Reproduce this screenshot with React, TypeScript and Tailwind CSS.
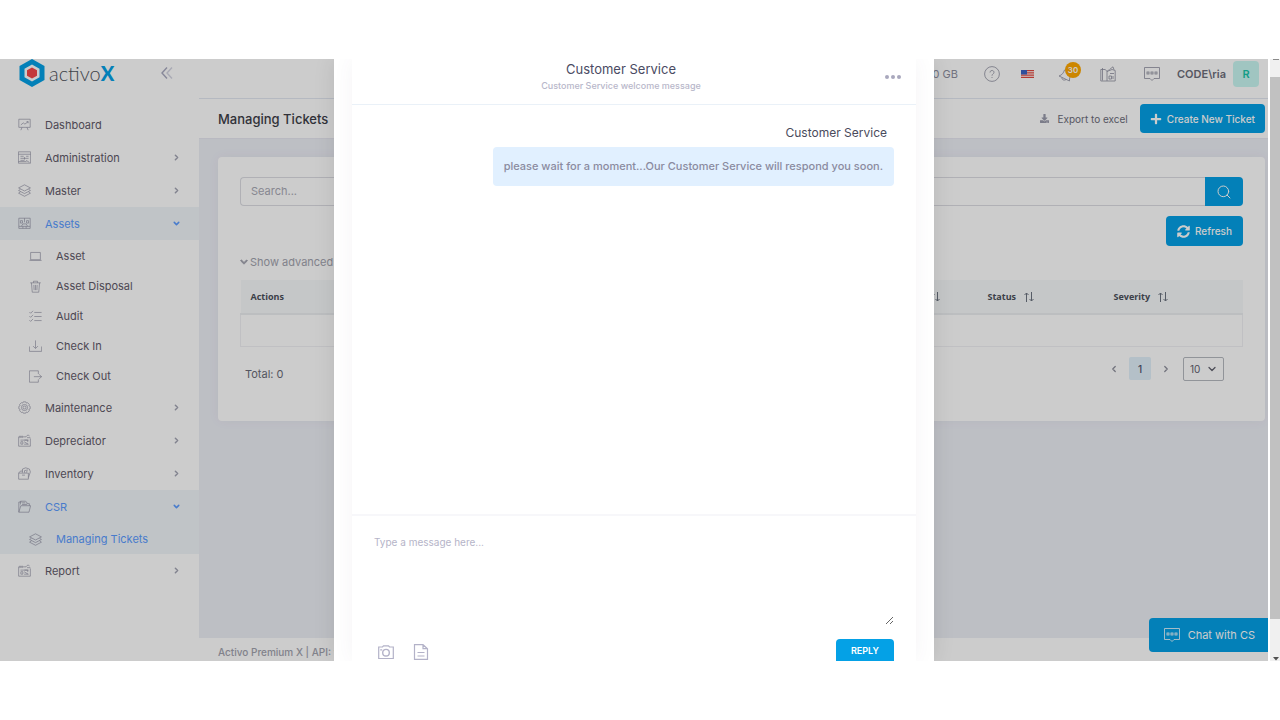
import type { ReactNode } from 'react';
import { FaChevronDown, FaDownload, FaPlus, FaSyncAlt } from 'react-icons/fa';
import { ChevronDown, ChevronLeft, ChevronRight, Search } from 'lucide-react';

type IconName =
  | 'dashboard'
  | 'admin'
  | 'layers'
  | 'assets'
  | 'laptop'
  | 'trash'
  | 'checklist'
  | 'checkIn'
  | 'checkOut'
  | 'gear'
  | 'notebook'
  | 'planner'
  | 'inventory'
  | 'folder'
  | 'chat'
  | 'bell'
  | 'help'
  | 'camera'
  | 'file';

const iconShapes: Record<IconName, ReactNode> = {
  dashboard: (
    <path d="M1 1.500h14v10H1zM5 11.500l-1.500 3.500M11 11.500l1.500 3.500M3.500 8.500l3-2.500 2 1.500 4-3M10.500 4.500h2v2" />
  ),
  admin: (
    <path d="M.5 1h15v14H.5zM.5 4h15M3 6.500h4M10 6.500h3M3 9h10M8 7.500v3M3 11.500h5M.5 13h10M10 11.500l4 2.500" />
  ),
  layers: (
    <path d="M8 1l7.300 3.800L8 8.600.7 4.800zM3 6.500L.7 8 8 11.800 15.300 8 13 6.500M3 9.800L.7 11.300 8 15.100l7.300-3.800L13 9.800" />
  ),
  assets: (
    <path d="M1 1.500h14v10H1zM1 14h14M1 11.500V14M15 11.500V14M3 4.500h2.500v3H3zM10.500 4.500H13v3h-2.500zM4 11.500l2-3h4l2 3M6 14v-2.500M10 14v-2.500M8 1.500v5" />
  ),
  laptop: <path d="M2 3h12v9H2zM.5 12.800h15" />,
  trash: (
    <path d="M1.500 3.500h13M5.500 3.500v-2h5v2M3 3.500l1 11.500h8l1-11.500M6 6l.3 6.500M8 6v6.500M10 6l-.3 6.500" />
  ),
  checklist: (
    <path d="M6.500 3H15.500M6.500 8H15.500M6.500 13H15.500M.5 2.500L2 4 5 1M.5 7.500L2 9l3-3M.5 12.500L2 14l3-3" />
  ),
  checkIn: <path d="M.5 8v6h15V8M8 .5v9.500M5 7.500l3 3 3-3" />,
  checkOut: <path d="M11.500 5V1H.5v14h11v-3.500M6 8.200h9.500M12.500 5.500l3 2.700-3 2.700" />,
  gear: (
    <>
      <path d="M6.500 1h3l.6 1.500 1.800-.4 2 2.100-.5 1.600 1.600.9v2.800l-1.600.8.5 1.700-2 2.100-1.800-.5-.6 1.400h-3l-.7-1.400-1.700.5-2.100-2.100.6-1.700L1 9.500V6.700l1.600-.9L2 4.200l2.100-2.100 1.700.4z" />
      <circle cx="8" cy="8" r="3.800" />
      <circle cx="8" cy="8" r="1.800" />
    </>
  ),
  notebook: (
    <path d="M.8 3.500h9M15.200 5.500V15H.8V3.500M2.500 2v3M5 2v3M9.800 3.500c1.500-2.500 3-2.500 4.500-1M11 4.500h4.200M3 7.500h10M3.500 9.500h2.500v3H3.500zM7.500 9.500l5 3M7.500 12.500h5.500M8 7.500h4v2.500" />
  ),
  planner: (
    <path d="M.8 3.500h4.500L7 5.500l2-2M.8 3.500V15h14.400V4.500L12 3.500 7 5.500V15M2.500 2v12.500M10 7.500h4M9 10h2.500v3H9zM13 10v3M9.500 3.500L13 .8l1 3" />
  ),
  inventory: (
    <path d="M.8 7.500h12V15H.8zM.8 7.500L3 5h2.500M5.500 7V2.500l4-1.500 4.500 1.500 1.200 3.500-2.400 7M8 7V4.500l4-1M10 7l1.500-2.500M5 10h3.500" />
  ),
  folder: (
    <path d="M1 15V2.500h3.500M1 15l2.500-8h12L13.500 15zM3 5.500V1.500h6l2 1.500v1.500h3V7M5 3.500h4M5 5.500h6" />
  ),
  chat: (
    <>
      <path d="M.5 1.500h15v11H10L8 14.500l-2-2H.5z" />
      <rect x="3" y="6" width="2" height="2" />
      <rect x="7" y="6" width="2" height="2" />
      <rect x="11" y="6" width="2" height="2" />
    </>
  ),
  bell: (
    <path d="M1 10l10.500 5M1 10c3-1 4.500-3 5.500-6L9 2l5 3-.5 3c-1.500 2.500-2.200 4-2 7M4 11.500c-.5 2 2 3.500 4 2" />
  ),
  help: (
    <>
      <circle cx="8" cy="8" r="7.400" />
      <path d="M6 6.500c0-2.800 4-2.500 4-.2C10 8 8 7.900 8 9.700M8 11v1" />
    </>
  ),
  camera: (
    <>
      <path d="M.7 3h3.800l1-1.200h5l1 1.200h3.800v11.500H.7zM2.200 5.800h2" strokeWidth="1.200" />
      <circle cx="8" cy="8.700" r="3.300" strokeWidth="1.400" />
    </>
  ),
  file: (
    <path d="M1.500.7H10l4.500 4V15.300h-13zM10 .7v4h4.500M4.500 8.500h7M4.500 12h7" strokeWidth="1.200" />
  ),
};

function Icon({ name, className }: { name: IconName; className?: string }) {
  return (
    <svg
      viewBox="0 0 16 16"
      fill="none"
      stroke="currentColor"
      strokeWidth="0.8"
      aria-hidden="true"
      className={`shrink-0 ${className ?? 'size-[13px]'}`}
    >
      {iconShapes[name]}
    </svg>
  );
}

interface MenuItem {
  label: string;
  icon: IconName;
  leaf?: boolean;
  open?: boolean;
  children?: { label: string; icon: IconName; active?: boolean }[];
}

const menu: MenuItem[] = [
  { label: 'Dashboard', icon: 'dashboard', leaf: true },
  { label: 'Administration', icon: 'admin' },
  { label: 'Master', icon: 'layers' },
  {
    label: 'Assets',
    icon: 'assets',
    open: true,
    children: [
      { label: 'Asset', icon: 'laptop' },
      { label: 'Asset Disposal', icon: 'trash' },
      { label: 'Audit', icon: 'checklist' },
      { label: 'Check In', icon: 'checkIn' },
      { label: 'Check Out', icon: 'checkOut' },
    ],
  },
  { label: 'Maintenance', icon: 'gear' },
  { label: 'Depreciator', icon: 'notebook' },
  { label: 'Inventory', icon: 'inventory' },
  {
    label: 'CSR',
    icon: 'folder',
    open: true,
    children: [{ label: 'Managing Tickets', icon: 'layers', active: true }],
  },
  { label: 'Report', icon: 'notebook' },
];

function Logo() {
  return (
    <a href="#" className="flex items-center gap-1">
      <svg viewBox="0 0 26 28" className="h-7 w-[26px]" aria-hidden="true">
        <path d="M13 0l12.500 7v14L13 28 .5 21V7z" fill="#04a1e6" />
        <path d="M13 5.500l7.500 4.200v8.600L13 22.500l-7.500-4.200V9.700z" fill="#fff" />
        <path d="M13 8.500l5 2.800v5.400l-5 2.800-5-2.800v-5.400z" fill="#f54748" />
      </svg>
      <span className="font-['Lato',sans-serif] text-xl leading-7 font-light text-[#50545c]">
        activo<span className="font-black text-[#04a1e6]">X</span>
      </span>
    </a>
  );
}

function Sidebar() {
  return (
    <aside className="w-[199px] shrink-0 bg-white shadow-[0_0_20px_rgba(82,63,105,0.15)]">
      <div className="flex h-[49px] items-start justify-between pr-[26px] pl-[19px]">
        <Logo />
        <button type="button" aria-label="Collapse menu" className="flex h-7 items-center">
          <svg viewBox="0 0 12 12" className="size-3" fill="none" strokeWidth="1.4" aria-hidden="true">
            <path d="M6 0.500L1 6l5 5.500" stroke="#a9aac0" />
            <path d="M11 0.500L6 6l5 5.500" stroke="#d4d5e2" />
          </svg>
        </button>
      </div>
      <nav>
        <ul>
          {menu.map((item) => (
            <li key={item.label} className={item.label === 'CSR' ? 'bg-[#f0f5f9]' : ''}>
              <a
                href="#"
                className={`flex h-[33px] items-center px-[18px] ${
                  item.open ? 'bg-[#f0f5f9] text-[#5b9bff]' : 'text-[#5f5a69]'
                }`}
              >
                <Icon name={item.icon} className="size-[13px] text-[#8f90a2]" />
                <span className="ml-[14px] flex-1">{item.label}</span>
                {item.open && <ChevronDown className="size-[9px]" strokeWidth={4} />}
                {!item.open && !item.leaf && (
                  <ChevronRight className="size-[9px] text-[#a3a4b3]" strokeWidth={4} />
                )}
              </a>
              {item.children && (
                <ul className="pt-px">
                  {item.children.map((child) => (
                    <li key={child.label}>
                      <a
                        href="#"
                        className={`flex h-[30px] items-center gap-[14px] pl-[29px] ${
                          child.active ? 'text-[#5b9bff]' : 'text-[#5f5a69]'
                        }`}
                      >
                        <Icon name={child.icon} className="size-[13px] text-[#8f90a2]" />
                        {child.label}
                      </a>
                    </li>
                  ))}
                </ul>
              )}
            </li>
          ))}
        </ul>
      </nav>
    </aside>
  );
}

function Flag() {
  return (
    <svg viewBox="0 0 13 8" className="h-2 w-[13px]" aria-hidden="true">
      <path d="M0 0h13v8H0z" fill="#fff" />
      <path d="M0 .6h13M0 2.900h13M0 5.200h13M0 7.400h13" stroke="#e2483f" strokeWidth="1.200" />
      <path d="M0 0h6v4.500H0z" fill="#3b63c4" />
    </svg>
  );
}

function TopBar() {
  return (
    <header className="flex h-10 items-center justify-end border-b border-[#e3e8f2] bg-white pr-[9px] pb-[10px] text-[#8e8f9f]">
      <span className="mr-4">0 GB</span>
      <button type="button" aria-label="Help" className="flex w-9 justify-center">
        <Icon name="help" className="size-4" />
      </button>
      <button type="button" aria-label="Language" className="flex w-9 justify-center">
        <Flag />
      </button>
      <button type="button" aria-label="Notifications" className="relative flex w-10 justify-center">
        <Icon name="bell" className="size-4" />
        <span className="absolute -top-1 right-[5px] flex size-4 items-center justify-center rounded-full bg-[#ffa800] text-[8px] font-semibold text-white">
          30
        </span>
      </button>
      <button type="button" aria-label="Notes" className="flex w-11 justify-center">
        <Icon name="planner" className="size-4" />
      </button>
      <button type="button" aria-label="Messages" className="flex w-11 justify-center">
        <Icon name="chat" className="size-4" />
      </button>
      <button type="button" className="ml-[3px] flex items-center gap-[7px] text-[11px] font-semibold text-[#6c6d7a]">
        CODE\ria
        <span className="flex size-[26px] items-center justify-center rounded bg-[#c9f7f2] text-[#1bc5a8]">
          R
        </span>
      </button>
    </header>
  );
}

function SortIcon() {
  return (
    <svg viewBox="0 0 10 10" className="inline h-[10px] w-[10px]" fill="none" stroke="#6c7480" aria-hidden="true">
      <path d="M2.500 10V1M.5 3l2-2 2 2M7.500 0v9M5.500 7l2 2 2-2" />
    </svg>
  );
}

function TicketsCard() {
  return (
    <section className="mt-[18px] mr-[3px] ml-[19px] rounded bg-white px-[22px] pt-5 pb-10 shadow-[0_0_12px_rgba(82,63,105,0.05)]">
      <form className="flex h-[29px]">
        <input
          type="search"
          aria-label="Search"
          placeholder="Search..."
          className="min-w-0 flex-1 rounded-l border border-r-0 border-[#dcdde3] px-[10px] pb-[2px] placeholder:text-[#a9a9b5]"
        />
        <button type="button" aria-label="Search" className="flex w-[38px] items-center justify-center rounded-r bg-[#04a1e6] text-white">
          <Search className="size-4" strokeWidth={1.5} />
        </button>
      </form>
      <div className="mt-[10px] flex justify-end">
        <button type="button" className="flex h-[30px] items-center gap-[5px] rounded bg-[#04a1e6] px-[11px] text-[10px] font-medium text-white">
          <FaSyncAlt className="size-[13px]" />
          Refresh
        </button>
      </div>
      <button type="button" className="mt-2 flex h-4 items-center gap-[2px] text-[#a2a3ae]">
        <FaChevronDown className="size-2" stroke="currentColor" strokeWidth={50} />
        Show advanced filters
      </button>
      <table className="mt-[10px] w-full table-fixed font-['Open_Sans',sans-serif] text-[9px]">
        <colgroup>
          <col />
          <col className="w-[126px]" />
          <col className="w-[126px]" />
          <col className="w-[139px]" />
        </colgroup>
        <thead>
          <tr className="h-[34px] border-b-2 border-[#eceef1] bg-[#f7f9fb] text-left text-[#4b4f59]">
            <th className="px-[10px] font-bold">Actions</th>
            <th className="pr-[38px] text-right">
              <SortIcon />
            </th>
            <th className="px-[10px] font-bold">
              Status <span className="ml-[6px]"><SortIcon /></span>
            </th>
            <th className="px-[10px] font-bold">
              Severity <span className="ml-[6px]"><SortIcon /></span>
            </th>
          </tr>
        </thead>
        <tbody>
          <tr className="h-8">
            <td colSpan={4} className="border border-[#f0f0f4]" />
          </tr>
        </tbody>
      </table>
      <div className="mt-[10px] flex h-6 items-center pr-[19px] pl-[5px]">
        <span className="mt-[10px] flex-1 text-[#6a6b78]">Total: 0</span>
        <button type="button" aria-label="Previous page" className="px-[10px] text-[#8f909c]">
          <ChevronLeft className="size-[10px]" strokeWidth={3} />
        </button>
        <button type="button" className="h-[23px] w-[22px] rounded-xs bg-[#e1f0fa] text-[10px] font-medium text-[#50526a]">
          1
        </button>
        <button type="button" aria-label="Next page" className="px-[10px] text-[#8f909c]">
          <ChevronRight className="size-[10px]" strokeWidth={3} />
        </button>
        <label className="relative ml-[2px] flex items-center">
          <select
            aria-label="Rows per page"
            className="h-6 w-[41px] appearance-none rounded-xs border border-[#b6b9c0] bg-white pl-[6px] text-[10px] text-[#60616e]"
          >
            <option>10</option>
          </select>
          <ChevronDown className="pointer-events-none absolute right-[6px] size-3 text-[#60616e]" strokeWidth={2.5} />
        </label>
      </div>
    </section>
  );
}

function ChatDialog() {
  return (
    <div role="dialog" aria-label="Customer Service" className="flex w-[600px] bg-white px-[18px] shadow-[0_0_20px_rgba(0,0,0,0.1)]">
      <div className="flex flex-1 flex-col bg-white shadow-[0_0_20px_rgba(82,63,105,0.06)]">
        <div className="flex h-[46px] items-center border-b border-[#eaf1f8] pl-[5px]">
          <div className="flex-1 pb-3 text-center">
            <h2 className="text-[13px] leading-5 text-[#4a4b63]">Customer Service</h2>
            <p className="text-[9px] leading-[14px] font-medium text-[#b8b7ca]">Customer Service welcome message</p>
          </div>
          <button type="button" aria-label="More options" className="mr-[15px] flex gap-[2px] pb-[10px]">
            <span className="size-1 rounded-full bg-[#a9a8bd]" />
            <span className="size-1 rounded-full bg-[#a9a8bd]" />
            <span className="size-1 rounded-full bg-[#a9a8bd]" />
          </button>
        </div>
        <div className="flex flex-1 flex-col items-end px-[22px] pt-[18px]">
          <p className="mr-[7px] text-xs leading-5 text-[#4a4b5c]">Customer Service</p>
          <p className="mt-1 rounded bg-[#e1f0ff] px-[11px] py-3 text-[11px] leading-[15px] font-medium text-[#8b8ba0]">
            please wait for a moment...Our Customer Service will respond you soon.
          </p>
        </div>
        <form className="border-t-2 border-[#f7f7fa] px-[22px] pt-[18px]">
          <textarea
            aria-label="Message"
            placeholder="Type a message here..."
            className="block h-[91px] w-full resize-y text-[10px] placeholder:text-[#b5b4c8]"
          />
          <div className="mt-[14px] flex h-[22px] items-center gap-[19px] text-[#b3b2c8]">
            <button type="button" aria-label="Attach photo" className="ml-1 pt-1">
              <Icon name="camera" className="size-4" />
            </button>
            <button type="button" aria-label="Attach file" className="pt-1">
              <Icon name="file" className="size-4" />
            </button>
            <button type="button" className="ml-auto h-[22px] w-[58px] rounded-t bg-[#04a1e6] pt-[2px] text-[9px] font-semibold text-white">
              REPLY
            </button>
          </div>
        </form>
      </div>
    </div>
  );
}

function ScrollRail() {
  return (
    <div className="flex w-3 shrink-0 flex-col items-center border-l-2 border-white bg-[#f0f0f0]">
      <svg viewBox="0 0 10 18" className="h-[18px] w-[10px]" aria-hidden="true">
        <path d="M3 0h6v1H3z" fill="#8a8a8a" />
      </svg>
      <div className="w-full flex-1 bg-[#c1c1c1]" />
      <svg viewBox="0 0 10 42" className="h-[42px] w-[10px]" aria-hidden="true">
        <path d="M3 38h6l-3 3.500z" fill="#505050" />
      </svg>
    </div>
  );
}

export default function App() {
  return (
    <div className="flex min-h-screen flex-col bg-white py-[59px] font-['Inter',sans-serif] text-[11px] leading-4">
      <div className="flex flex-1">
        <div className="relative flex min-w-0 flex-1 overflow-hidden">
          <Sidebar />
          <div className="flex min-w-0 flex-1 flex-col bg-[#edeff6]">
            <TopBar />
            <div className="flex h-10 items-center justify-between border-b border-[#e8e8f2] bg-white pr-[3px] pl-[19px]">
              <h1 className="text-[13px] font-medium text-[#3d3e48]">Managing Tickets</h1>
              <div className="flex items-center gap-3 text-[10px]">
                <button type="button" className="flex items-center gap-2 text-[#6c6d7a]">
                  <FaDownload className="size-[9px] text-[#9a9bac]" />
                  Export to excel
                </button>
                <button type="button" className="flex h-[29px] items-center gap-[5px] rounded bg-[#04a1e6] px-[10px] font-medium text-white">
                  <FaPlus className="size-3" />
                  Create New Ticket
                </button>
              </div>
            </div>
            <main className="flex-1">
              <TicketsCard />
            </main>
            <footer className="h-[23px] bg-white pt-[6px] pl-[19px] text-[10px] font-medium text-[#a2a3ae]">
              Activo Premium X | API: v1
            </footer>
          </div>
          <button type="button" className="absolute right-0 bottom-[9px] flex h-[34px] items-center gap-2 rounded-l bg-[#04a1e6] pr-[13px] pl-[15px] text-[11px] text-white">
            <Icon name="chat" className="size-4" />
            Chat with CS
          </button>
          <div className="absolute inset-0 flex justify-center bg-black/20">
            <ChatDialog />
          </div>
        </div>
        <ScrollRail />
      </div>
    </div>
  );
}
